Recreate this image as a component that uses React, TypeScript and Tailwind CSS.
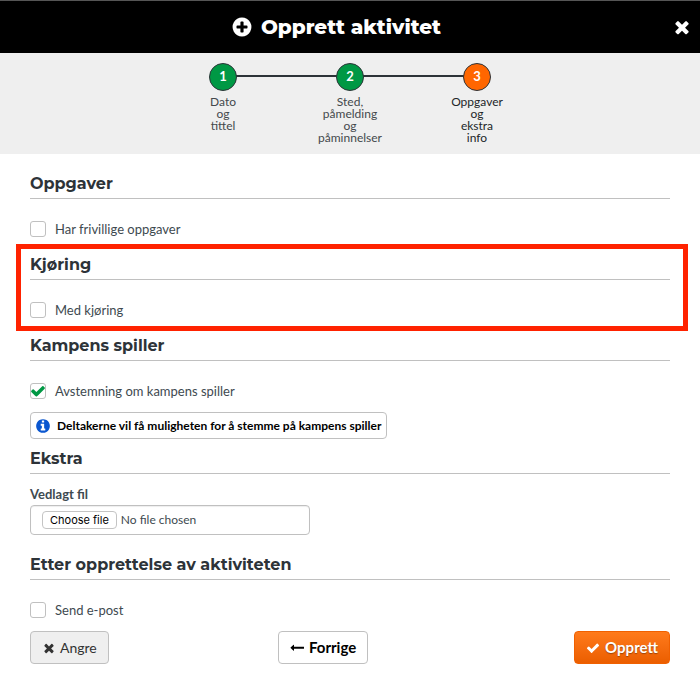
import React from "react";

const ICONS = {
  times:
    "M1490 1322q0 40-28 68l-136 136q-28 28-68 28t-68-28l-294-294-294 294q-28 28-68 28t-68-28l-136-136q-28-28-28-68t28-68l294-294-294-294q-28-28-28-68t28-68l136-136q28-28 68-28t68 28l294 294 294-294q28-28 68-28t68 28l136 136q28 28 28 68t-28 68l-294 294 294 294q28 28 28 68z",
  check:
    "M1671 566q0 40-28 68l-724 724-136 136q-28 28-68 28t-68-28l-136-136-362-362q-28-28-28-68t28-68l136-136q28-28 68-28t68 28l294 295 656-657q28-28 68-28t68 28l136 136q28 28 28 68z",
  plusCircle:
    "M1344 960v-128q0-26-19-45t-45-19h-256v-256q0-26-19-45t-45-19h-128q-26 0-45 19t-19 45v256h-256q-26 0-45 19t-19 45v128q0 26 19 45t45 19h256v256q0 26 19 45t45 19h128q26 0 45-19t19-45v-256h256q26 0 45-19t19-45zm320-64q0 209-103 385.500t-279.500 279.500-385.500 103-385.500-103-279.500-279.500-103-385.500 103-385.500 279.500-279.500 385.500-103 385.500 103 279.500 279.500 103 385.500z",
  infoCircle:
    "M1152 1376v-160q0-14-9-23t-23-9h-96v-512q0-14-9-23t-23-9h-320q-14 0-23 9t-9 23v160q0 14 9 23t23 9h96v320h-96q-14 0-23 9t-9 23v160q0 14 9 23t23 9h448q14 0 23-9t9-23zm-128-896v-160q0-14-9-23t-23-9h-192q-14 0-23 9t-9 23v160q0 14 9 23t23 9h192q14 0 23-9t9-23zm640 416q0 209-103 385.500t-279.500 279.500-385.500 103-385.500-103-279.500-279.500-103-385.500 103-385.500 279.500-279.500 385.500-103 385.500 103 279.500 279.500 103 385.500z",
  arrowLeft:
    "M1792 832v128q0 14-9 23t-23 9h-1248v224q0 21-19 29t-35-5l-384-350q-10-10-10-23 0-14 10-24l384-354q16-14 35-6 19 9 19 29v224h1248q14 0 23 9t9 23z",
};

function Icon({ name, className }: { name: keyof typeof ICONS; className: string }) {
  return (
    <svg viewBox="0 0 1792 1792" fill="currentColor" aria-hidden="true" className={className}>
      <path d={ICONS[name]} />
    </svg>
  );
}

const STEPS = [
  { label: "Dato\nog\ntittel", circle: "bg-[#009844]", text: "text-[#44494c]" },
  { label: "Sted,\npåmelding\nog\npåminnelser", circle: "bg-[#009844]", text: "text-[#44494c]" },
  { label: "Oppgaver\nog\nekstra\ninfo", circle: "bg-[#ff6600]", text: "text-[#222629]" },
];

function Stepper() {
  return (
    <ol className="flex h-[101px] justify-center bg-[#efefef] pt-[10px]">
      {STEPS.map((step, i) => (
        <li key={i} className="relative flex w-[127px] flex-col items-center">
          {i > 0 && <span className="absolute top-3 right-1/2 h-[2px] w-full bg-[#2d3338]" />}
          <span
            className={`relative z-10 flex size-7 items-center justify-center rounded-full border border-[#2d3338] text-[13px] font-bold text-white ${step.circle}`}
          >
            {i + 1}
          </span>
          <span className={`mt-[5px] text-center text-xs leading-[12px] whitespace-pre-line ${step.text}`}>
            {step.label}
          </span>
        </li>
      ))}
    </ol>
  );
}

function Section({ title, children }: { title: string; children: React.ReactNode }) {
  return (
    <section className="relative">
      <h2 className="border-b border-[#c0c0c0] pb-px font-['Montserrat','Inter',sans-serif] text-[16px] leading-[26px] font-bold text-[#2d3338]">
        {title}
      </h2>
      {children}
    </section>
  );
}

function Checkbox({ id, label, checked }: { id: string; label: string; checked?: boolean }) {
  return (
    <div className="mt-[22px] flex h-4 items-center gap-[9px]">
      <span className="relative flex size-4">
        <input
          id={id}
          type="checkbox"
          defaultChecked={checked}
          className="peer size-4 appearance-none rounded-[3px] border border-[#c0c0c0] bg-white"
        />
        <Icon
          name="check"
          className="pointer-events-none absolute inset-0 hidden size-4 text-[#009844] peer-checked:block"
        />
      </span>
      <label htmlFor={id} className="text-[13px] leading-4">
        {label}
      </label>
    </div>
  );
}

export default function App() {
  return (
    <main className="min-h-[694px] bg-white font-['Lato',sans-serif] text-[#3e4a50]">
      <header className="flex h-[53px] items-center border-t border-[#555555] bg-black px-2 text-white">
        <h1 className="flex flex-1 items-center justify-center gap-2 pr-2 font-['Montserrat','Inter',sans-serif] text-[20px] leading-6 font-extrabold">
          <Icon name="plusCircle" className="size-[22px]" />
          Opprett aktivitet
        </h1>
        <button type="button" aria-label="Lukk" className="flex">
          <Icon name="times" className="size-5" />
        </button>
      </header>
      <Stepper />

      <form className="px-[30px] pt-[17px]" onSubmit={(e) => e.preventDefault()}>
        <div className="flex flex-col gap-[15px]">
          <Section title="Oppgaver">
            <Checkbox id="tasks" label="Har frivillige oppgaver" />
          </Section>
          <Section title="Kjøring">
            <Checkbox id="driving" label="Med kjøring" />
            <span className="pointer-events-none absolute -top-2 -right-[18px] -bottom-[13px] -left-[14px] border-[5px] border-[#ff2200]" />
          </Section>
          <Section title="Kampens spiller">
            <Checkbox id="vote" label="Avstemning om kampens spiller" checked />
          </Section>
        </div>
        <p className="mt-[13px] mb-[7px] flex h-[27px] w-fit items-center gap-[6px] rounded-[4px] border border-[#c0c0c0] pr-[5px] pl-1 text-[12px] font-bold text-black">
          <Icon name="infoCircle" className="size-4 text-[#0b57d0]" />
          Deltakerne vil få muligheten for å stemme på kampens spiller
        </p>

        <Section title="Ekstra">
          <label htmlFor="attachment" className="mt-3 block text-[13px] leading-4 font-bold">
            Vedlagt fil
          </label>
          <div className="relative mt-[3px] mb-[17px] flex h-[30px] w-[280px] items-center gap-1 rounded-[4px] border border-[#c0c0c0] px-[11px] text-[12px] shadow-[inset_0_1px_1px_rgba(0,0,0,0.07)]">
            <span className="flex h-[18px] items-center rounded-[4px] border border-[#c4c4c4] bg-white px-[7px] font-['Inter',sans-serif] text-[11px] text-black">
              Choose file
            </span>
            <span>No file chosen</span>
            <input id="attachment" type="file" className="absolute inset-0 size-full opacity-0" />
          </div>
        </Section>

        <Section title="Etter opprettelse av aktiviteten">
          <Checkbox id="email" label="Send e-post" />
        </Section>

        <div className="mt-[13px] grid grid-cols-[31fr_25fr_24fr] items-center">
          <button
            type="button"
            className="flex h-[33px] items-center gap-1 justify-self-start rounded-[4px] border border-[#c0c0c0] bg-[#efefef] px-[11px] text-[14px] text-[#333333]"
          >
            <Icon name="times" className="size-[14px]" />
            Angre
          </button>
          <button
            type="button"
            className="flex h-[33px] items-center gap-[5px] justify-self-start rounded-[4px] border border-[#c0c0c0] bg-white px-[11px] text-[15px] font-bold text-black"
          >
            <Icon name="arrowLeft" className="size-[14px]" />
            Forrige
          </button>
          <button
            type="submit"
            className="flex h-[33px] items-center gap-[5px] justify-self-end rounded-[4px] border border-[#f06000] bg-linear-to-b from-[#ff7a1a] to-[#eb5e00] px-[11px] text-[15px] font-bold text-white text-shadow-[0_1px_1px_rgba(0,0,0,0.35)]"
          >
            <Icon name="check" className="size-[14px]" />
            Opprett
          </button>
        </div>
      </form>
    </main>
  );
}
